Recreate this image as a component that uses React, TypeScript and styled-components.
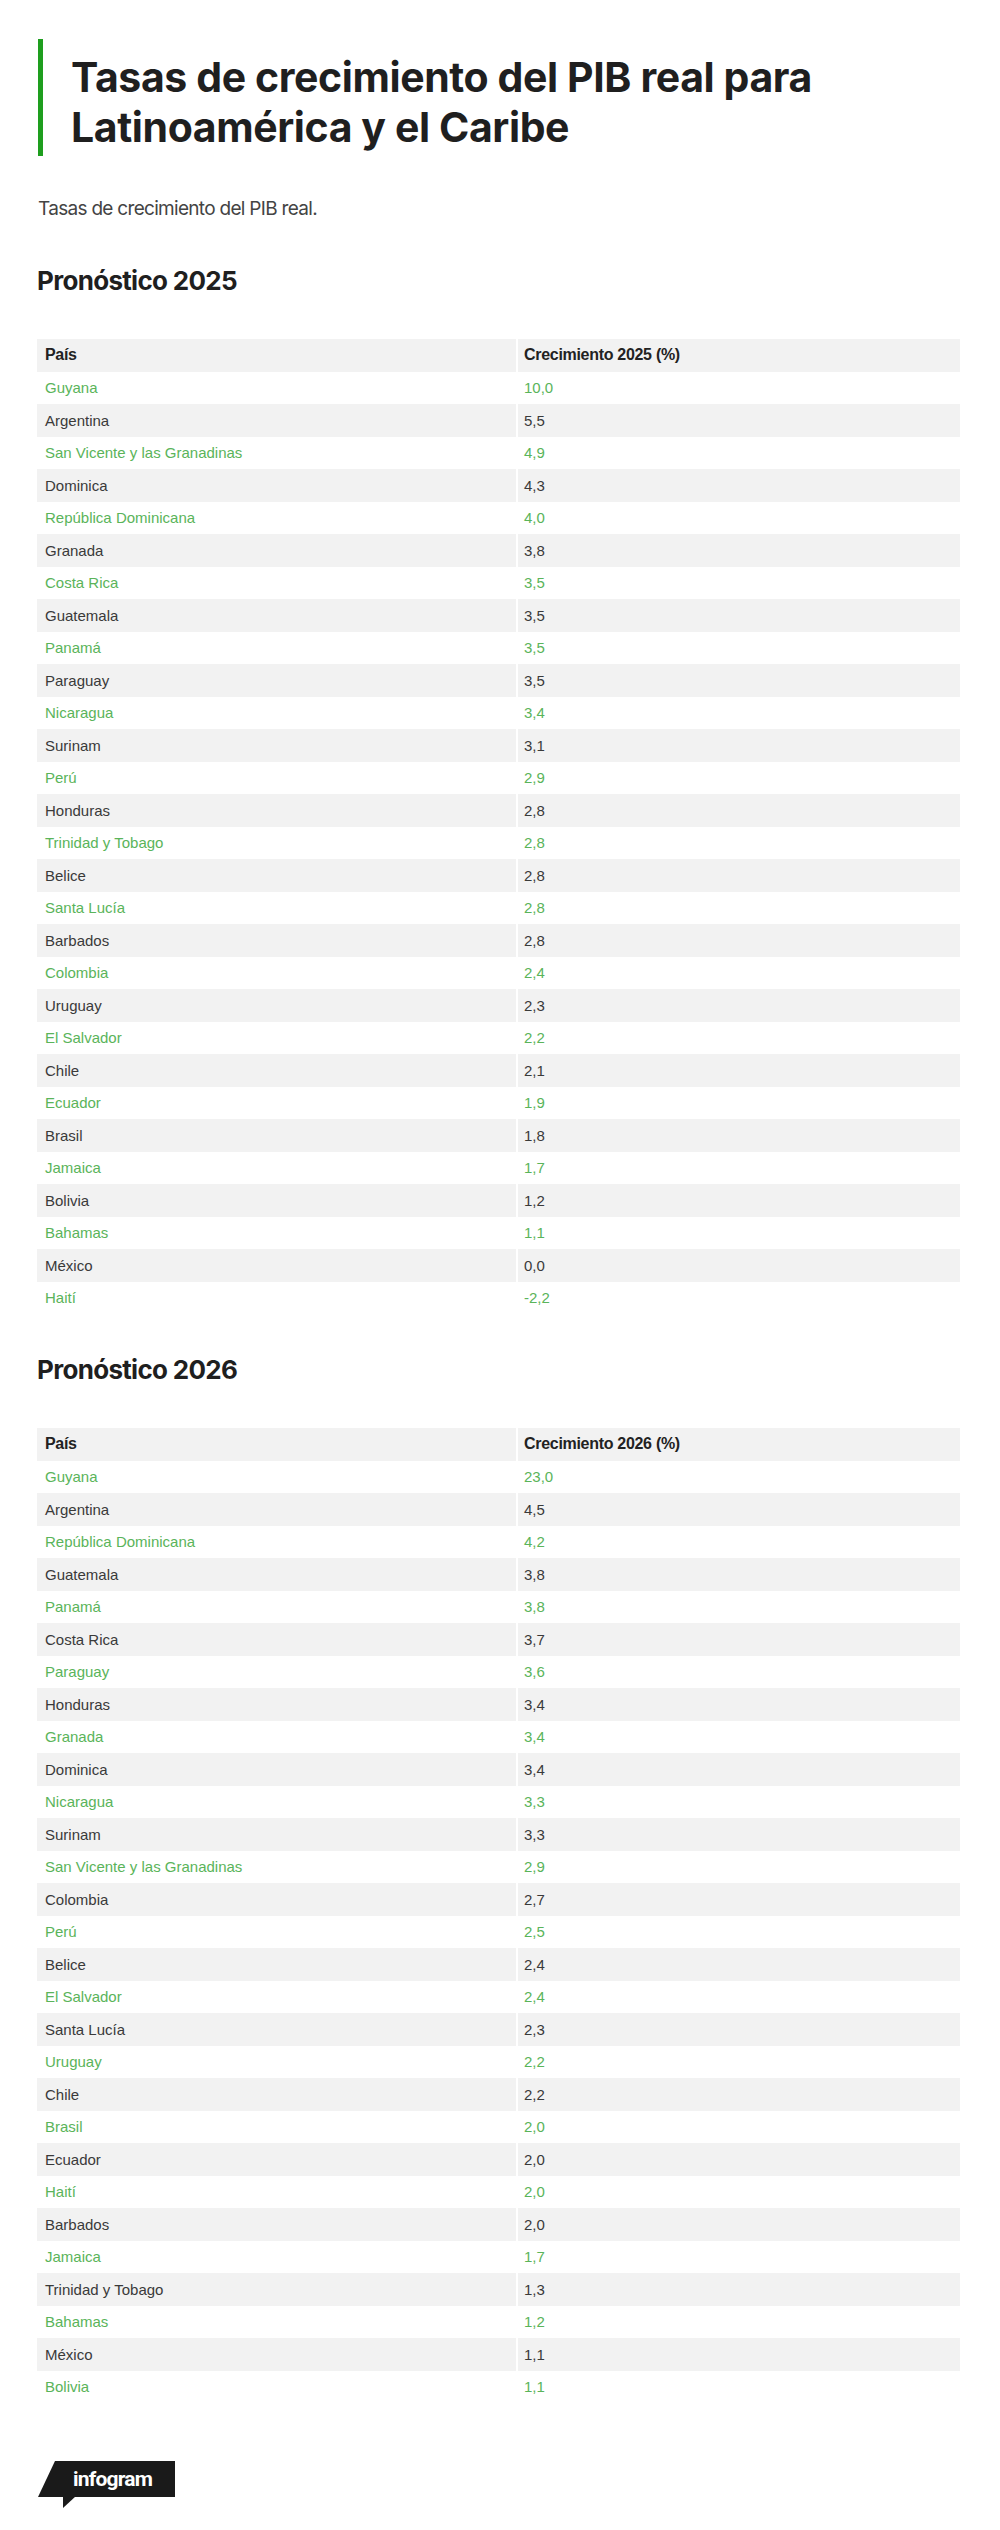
import React from 'react';
import styled, { createGlobalStyle } from 'styled-components';

type Row = [string, string];

const data2025: Row[] = [
  ['Guyana', '10,0'],
  ['Argentina', '5,5'],
  ['San Vicente y las Granadinas', '4,9'],
  ['Dominica', '4,3'],
  ['República Dominicana', '4,0'],
  ['Granada', '3,8'],
  ['Costa Rica', '3,5'],
  ['Guatemala', '3,5'],
  ['Panamá', '3,5'],
  ['Paraguay', '3,5'],
  ['Nicaragua', '3,4'],
  ['Surinam', '3,1'],
  ['Perú', '2,9'],
  ['Honduras', '2,8'],
  ['Trinidad y Tobago', '2,8'],
  ['Belice', '2,8'],
  ['Santa Lucía', '2,8'],
  ['Barbados', '2,8'],
  ['Colombia', '2,4'],
  ['Uruguay', '2,3'],
  ['El Salvador', '2,2'],
  ['Chile', '2,1'],
  ['Ecuador', '1,9'],
  ['Brasil', '1,8'],
  ['Jamaica', '1,7'],
  ['Bolivia', '1,2'],
  ['Bahamas', '1,1'],
  ['México', '0,0'],
  ['Haití', '-2,2'],
];

const data2026: Row[] = [
  ['Guyana', '23,0'],
  ['Argentina', '4,5'],
  ['República Dominicana', '4,2'],
  ['Guatemala', '3,8'],
  ['Panamá', '3,8'],
  ['Costa Rica', '3,7'],
  ['Paraguay', '3,6'],
  ['Honduras', '3,4'],
  ['Granada', '3,4'],
  ['Dominica', '3,4'],
  ['Nicaragua', '3,3'],
  ['Surinam', '3,3'],
  ['San Vicente y las Granadinas', '2,9'],
  ['Colombia', '2,7'],
  ['Perú', '2,5'],
  ['Belice', '2,4'],
  ['El Salvador', '2,4'],
  ['Santa Lucía', '2,3'],
  ['Uruguay', '2,2'],
  ['Chile', '2,2'],
  ['Brasil', '2,0'],
  ['Ecuador', '2,0'],
  ['Haití', '2,0'],
  ['Barbados', '2,0'],
  ['Jamaica', '1,7'],
  ['Trinidad y Tobago', '1,3'],
  ['Bahamas', '1,2'],
  ['México', '1,1'],
  ['Bolivia', '1,1'],
];

const GlobalStyle = createGlobalStyle`
  html, body {
    margin: 0;
    padding: 0;
    background: #fff;
  }
  body {
    font-family: Inter, 'Liberation Sans', sans-serif;
    color: #222;
  }
`;

const Page = styled.div`
  width: 1000px;
  height: 2530px;
  box-sizing: border-box;
  padding: 39px 40px 0 37px;
`;

const TitleBlock = styled.header`
  border-left: 5px solid #1e9e1e;
  padding: 13px 0 4px 28px;
  margin-left: 1px;
`;

const Title = styled.h1`
  margin: 0;
  font-family: Inter, 'Liberation Sans', sans-serif;
  font-weight: 700;
  font-size: 41px;
  line-height: 50px;
  letter-spacing: -0.4px;
  color: #1f1f1f;
`;

const Subtitle = styled.p`
  margin: 40px 0 0 1px;
  font-family: Inter, 'Liberation Sans', sans-serif;
  font-weight: 400;
  font-size: 19px;
  line-height: 25px;
  letter-spacing: -0.7px;
  color: #444;
`;

const SectionTitle = styled.h2<{ $gap: number }>`
  margin: ${({ $gap }) => $gap}px 0 0 0;
  font-family: Inter, 'Liberation Sans', sans-serif;
  font-weight: 700;
  font-size: 26px;
  line-height: 32px;
  letter-spacing: -0.7px;
  color: #1f1f1f;
`;

const Table = styled.table`
  margin-top: 42px;
  width: 923px;
  border-collapse: collapse;
  table-layout: fixed;
  font-family: 'Liberation Sans', Arial, sans-serif;
  font-size: 15px;
`;

const HeadCell = styled.th<{ $first?: boolean }>`
  box-sizing: border-box;
  height: 32.5px;
  padding: 0 8px 0 ${({ $first }) => ($first ? 8 : 6)}px;
  text-align: left;
  font-size: 16px;
  font-weight: 700;
  color: #222;
  letter-spacing: -0.3px;
  background: #f2f2f2;
  border-left: ${({ $first }) => ($first ? 'none' : '2px solid #fff')};
  width: ${({ $first }) => ($first ? '480px' : 'auto')};
`;

const BodyRow = styled.tr<{ $odd: boolean }>`
  height: 32.5px;
  background: ${({ $odd }) => ($odd ? '#fff' : '#f2f2f2')};
  color: ${({ $odd }) => ($odd ? '#5ab45a' : '#3a3a3a')};
`;

const Cell = styled.td<{ $first?: boolean }>`
  padding: 0 8px 0 ${({ $first }) => ($first ? 8 : 6)}px;
  border-left: ${({ $first }) => ($first ? 'none' : '2px solid #fff')};
  white-space: nowrap;
`;

const Footer = styled.footer`
  margin-top: 58px;
  margin-left: 1px;
`;

const LogoWrap = styled.div`
  position: relative;
  width: 137px;
  height: 48px;
`;

const LogoText = styled.span`
  position: absolute;
  left: 35px;
  top: 5px;
  font-family: Roboto, 'Liberation Sans', sans-serif;
  font-weight: 700;
  font-size: 21px;
  line-height: 26px;
  letter-spacing: -0.8px;
  color: #fff;
`;

const Logo = () => (
  <LogoWrap>
    <svg width="137" height="48" viewBox="0 0 137 48">
      <polygon points="17,0 137,0 137,36 0,36" fill="#1a1a1a" />
      <polygon points="25,35 38,35 25,47" fill="#1a1a1a" />
    </svg>
    <LogoText>infogram</LogoText>
  </LogoWrap>
);

const GrowthTable = ({ year, rows }: { year: string; rows: Row[] }) => (
  <Table>
    <thead>
      <tr>
        <HeadCell $first>País</HeadCell>
        <HeadCell>Crecimiento {year} (%)</HeadCell>
      </tr>
    </thead>
    <tbody>
      {rows.map(([country, value], i) => (
        <BodyRow key={country} $odd={i % 2 === 0}>
          <Cell $first>{country}</Cell>
          <Cell>{value}</Cell>
        </BodyRow>
      ))}
    </tbody>
  </Table>
);

export default function App() {
  return (
    <Page>
      <GlobalStyle />
      <TitleBlock>
        <Title>
          Tasas de crecimiento del PIB real para
          <br />
          Latinoamérica y el Caribe
        </Title>
      </TitleBlock>
      <Subtitle>Tasas de crecimiento del PIB real.</Subtitle>
      <SectionTitle $gap={44}>Pronóstico 2025</SectionTitle>
      <GrowthTable year="2025" rows={data2025} />
      <SectionTitle $gap={40}>Pronóstico 2026</SectionTitle>
      <GrowthTable year="2026" rows={data2026} />
      <Footer>
        <Logo />
      </Footer>
    </Page>
  );
}
